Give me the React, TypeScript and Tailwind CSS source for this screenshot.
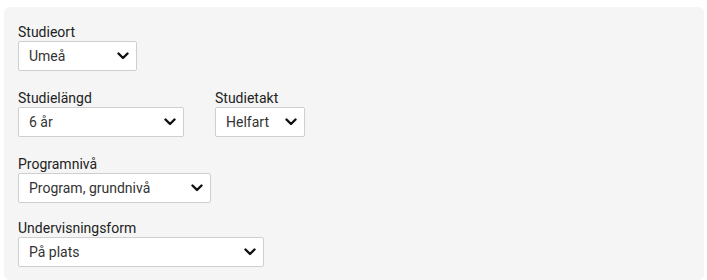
const font = { fontFamily: 'Roboto, "Liberation Sans", sans-serif' };

function Chevron() {
  return (
    <svg width="12" height="8" viewBox="0 0 12 8" className="shrink-0">
      <path d="M1.5 1.5 L6 6 L10.5 1.5" fill="none" stroke="#111" strokeWidth="2.4" strokeLinecap="round" strokeLinejoin="round" />
    </svg>
  );
}

function Field({ label, value, width, extra = '' }: { label: string; value: string; width: string; extra?: string }) {
  return (
    <div className={`flex flex-col ${extra}`}>
      <span className="text-[14px] leading-[18px] text-[#222]">{label}</span>
      <div className={`${width} h-[30px] flex items-center justify-between pl-[10px] pr-[7px] bg-white border border-[#cfcfcf] rounded-[2px] text-[14px] text-[#333]`}>
        <span>{value}</span>
        <Chevron />
      </div>
    </div>
  );
}

export default function App() {
  return (
    <div className="w-[707px] h-[280px] bg-white pt-[7px] pl-[4px]" style={font}>
      <div className="w-[700px] h-[273px] bg-[#f5f5f5] rounded-[6px] pt-[16px] pl-[14px] flex flex-col gap-[18px]">
        <Field label="Studieort" value="Umeå" width="w-[119px]" />
        <div className="flex gap-[31px]">
          <Field label="Studielängd" value="6 år" width="w-[166px]" />
          <Field label="Studietakt" value="Helfart" width="w-[90px]" />
        </div>
        <Field label="Programnivå" value="Program, grundnivå" width="w-[193px]" />
        <Field label="Undervisningsform" value="På plats" width="w-[246px]" extra="-mt-[2px]" />
      </div>
    </div>
  );
}
